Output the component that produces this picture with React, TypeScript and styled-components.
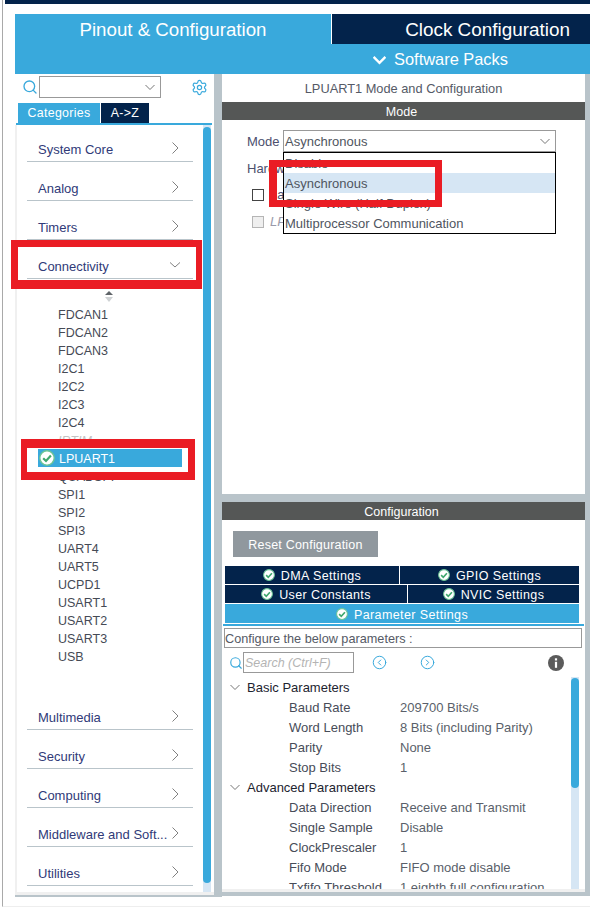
import React from "react"
import styled, { createGlobalStyle } from "styled-components"
import { CircleChevronLeft, CircleChevronRight, Search, Settings } from "lucide-react"

const navy = "#03234b"
const blue = "#39a9dc"
const gutter = "#b9c4ca"
const barGrey = "#555756"
const track = "#d6e6f4"

const GlobalStyle = createGlobalStyle`
    html, body {
        margin: 0;
        padding: 0;
        background: #fff;
    }
    * {
        box-sizing: border-box;
    }
`

const Page = styled.div`
    position: relative;
    width: 590px;
    height: 908px;
    overflow: hidden;
    padding-left: 2px;
    background: #fff;
    font-family: "Liberation Sans", Arial, sans-serif;
    font-size: 13px;
    color: #4a4f5a;
`
const Frame = styled.div`
    height: 907px;
    border-left: 1px solid #a9a9a9;
    border-bottom: 1px solid #eeeeee;
    padding-left: 2px;
`
const TopBar = styled.div`
    height: 4px;
    background: ${navy};
`
const Workspace = styled.div`
    margin-top: 10px;
    margin-left: 10px;
`
const Header = styled.header`
    display: grid;
    grid-template-columns: 316px 1fr;
    grid-template-rows: 30px 30px;
    background: ${blue};
    color: #fff;
`
const MainTab = styled.div`
    grid-row: span 2;
    padding-top: 5px;
    text-align: center;
    font-size: 18.7px;
    line-height: 22px;
`
const ClockTab = styled.div`
    border-left: 1px solid #fff;
    background: ${navy};
    padding: 5px 20px 0 0;
    text-align: right;
    font-size: 18.9px;
    line-height: 22px;
`
const PacksBar = styled.div`
    display: flex;
    align-items: center;
    justify-content: center;
    gap: 8px;
    padding-right: 40px;
    font-size: 16.4px;
`
const Body = styled.div`
    display: flex;
    align-items: flex-start;
`
const LeftPanel = styled.section`
    display: flex;
    flex-direction: column;
    width: 199px;
    height: 823px;
    border-bottom: 2px solid ${gutter};
`
const SearchRow = styled.div`
    display: flex;
    align-items: center;
    height: 22px;
    margin-top: 2px;
    padding-left: 7px;
`
const SearchIcon = styled(Search)`
    flex-shrink: 0;
    margin-right: 1px;
    color: ${blue};
`
const Combo = styled.div<{ $wide?: boolean }>`
    display: flex;
    align-items: center;
    justify-content: space-between;
    height: 22px;
    padding: 0 5px 0 1px;
    border: 1px solid #999;
    background: #fff;
    width: ${(p) => (p.$wide ? "273px" : "122px")};
`
const GearButton = styled.div`
    display: flex;
    margin-left: 30px;
    color: ${blue};
`
const ViewTabs = styled.div`
    display: flex;
    gap: 1px;
    height: 20px;
    margin: 5px 0 0 3px;
`
const ViewTab = styled.div<{ $active?: boolean }>`
    width: ${(p) => (p.$active ? "82px" : "48px")};
    padding-top: 1px;
    background: ${(p) => (p.$active ? blue : navy)};
    color: #fff;
    text-align: center;
    font-size: 12.4px;
    letter-spacing: 0.3px;
    line-height: 19px;
`
const BlueRule = styled.div`
    height: 2px;
    margin-left: 1px;
    margin-right: 2px;
    background: ${blue};
`
const ListArea = styled.div`
    flex: 1;
    min-height: 0;
    display: flex;
    border-left: 2px solid #f0f0f0;
    border-bottom: 3px solid #f0f0f0;
    padding-right: 3px;
`
const CategoryList = styled.div`
    flex: 1;
    min-width: 0;
    display: flex;
    flex-direction: column;
`
const Category = styled.div`
    display: flex;
    align-items: flex-end;
    justify-content: space-between;
    flex-shrink: 0;
    height: 39px;
    margin: 0 10px;
    padding: 0 13px 3px 11px;
    border-bottom: 1px solid ${gutter};
    color: #303a78;
    line-height: 16px;

    &:first-child {
        height: 37px;
    }
`
const CategoryIcon = styled.svg`
    flex-shrink: 0;
    margin-bottom: 4px;
`
const SubList = styled.div`
    display: flex;
    flex-direction: column;
    flex-shrink: 0;
    margin-bottom: 26px;
`
const ScrollMark = styled.svg`
    display: block;
    margin: 12px 0 2px 88px;
`
const SubItem = styled.div<{ $disabled?: boolean }>`
    height: 18px;
    padding-left: 41px;
    font-size: 12.5px;
    line-height: 20px;
    color: ${(p) => (p.$disabled ? "#c4c4c4" : "#454a55")};
    font-style: ${(p) => (p.$disabled ? "italic" : "normal")};
`
const SelectedItem = styled.div`
    display: flex;
    align-items: center;
    gap: 4px;
    width: 144px;
    height: 18px;
    margin-left: 21px;
    padding-left: 1px;
    background: ${blue};
    color: #fff;
    font-size: 12.5px;
`
const LoweredLabel = styled.span`
    margin-top: 2px;
`
const ScrollTrack = styled.div`
    flex-shrink: 0;
    width: 8px;
    background: ${track};
`
const ScrollThumb = styled.div<{ $top: number; $height: number }>`
    width: 100%;
    height: ${(p) => p.$height}px;
    margin-top: ${(p) => p.$top}px;
    border-radius: 4px;
    background: ${blue};
`
const Splitter = styled.div`
    flex-shrink: 0;
    width: 8px;
    height: 823px;
    background: ${gutter};
`
const RightColumn = styled.div`
    display: flex;
    flex-direction: column;
    flex: 1;
    height: 822px;
    padding: 0 5px 4px 0;
    background: ${gutter};
`
const ModePanel = styled.section`
    position: relative;
    height: 420px;
    flex-shrink: 0;
    background: #fff;
`
const PanelTitle = styled.div`
    height: 28px;
    padding-top: 7px;
    text-align: center;
    font-size: 12.8px;
    line-height: 16px;
    color: #555a66;
`
const DarkBar = styled.div`
    flex-shrink: 0;
    height: 18px;
    padding-right: 4px;
    background: ${barGrey};
    color: #fff;
    text-align: center;
    font-size: 12.5px;
    line-height: 20px;
`
const ModeRow = styled.div`
    display: flex;
    align-items: center;
    margin: 10px 0 0 25px;
    color: #4c4f6e;
`
const ModeLabel = styled.span`
    width: 36px;
`
const ComboValue = styled.span`
    color: #4f5560;
`
const HardwareLabel = styled.div`
    margin: 8px 0 0 25px;
    line-height: 18px;
    color: #4c4f6e;
    white-space: nowrap;
`
const CheckRow = styled.div<{ $disabled?: boolean }>`
    display: flex;
    align-items: center;
    gap: 6px;
    margin: ${(p) => (p.$disabled ? "15px" : "11px")} 0 0 30px;
    height: 12px;
    line-height: 12px;
    color: ${(p) => (p.$disabled ? "#9a9aaa" : "#4c4f6e")};
    font-style: ${(p) => (p.$disabled ? "italic" : "normal")};
    white-space: nowrap;
`
const CheckBox = styled.span<{ $disabled?: boolean }>`
    flex-shrink: 0;
    width: 12px;
    height: 12px;
    border: 1px solid ${(p) => (p.$disabled ? "#b5b5b5" : "#444")};
    background: ${(p) => (p.$disabled ? "#efefef" : "#fff")};
`
const Dropdown = styled.div`
    position: absolute;
    left: 61px;
    top: 78px;
    width: 273px;
    height: 82px;
    border: 1px solid #000;
    background: #fff;
`
const DropdownOption = styled.div<{ $active?: boolean }>`
    height: 20px;
    padding-left: 1px;
    line-height: 21px;
    color: #4f5560;
    background: ${(p) => (p.$active ? track : "transparent")};
`
const PanelGap = styled.div`
    flex-shrink: 0;
    height: 8px;
`
const ConfigPanel = styled.section`
    flex: 1;
    min-height: 0;
    display: flex;
    flex-direction: column;
    background: #fff;
    border-bottom: 3px solid #f0f0f0;
`
const ResetButton = styled.div`
    flex-shrink: 0;
    width: 145px;
    height: 26px;
    margin: 11px 0 0 11px;
    background: #90989e;
    color: #fff;
    text-align: center;
    font-size: 12.5px;
    letter-spacing: 0.2px;
    line-height: 28px;
`
const TabGrid = styled.div`
    display: flex;
    flex-direction: column;
    flex-shrink: 0;
    gap: 1px;
    margin: 9px 6px 0 3px;
`
const TabRow = styled.div`
    display: flex;
    gap: 1px;
`
const ConfigTab = styled.div<{ $width?: number; $active?: boolean }>`
    display: flex;
    align-items: center;
    justify-content: center;
    gap: 6px;
    flex: ${(p) => (p.$width ? `0 0 ${p.$width}px` : "1")};
    height: ${(p) => (p.$active ? "19px" : "18px")};
    background: ${(p) => (p.$active ? blue : navy)};
    color: #fff;
    font-size: 12.5px;
    letter-spacing: 0.4px;
`
const ConfigRule = styled.div`
    flex-shrink: 0;
    height: 2px;
    margin: 1px 1px 0 1px;
    background: ${blue};
`
const HintBox = styled.div`
    flex-shrink: 0;
    height: 20px;
    margin: 2px 3px 0 2px;
    border: 1px solid #999;
    color: #555a66;
    font-size: 12.7px;
    line-height: 20px;
`
const ParamTools = styled.div`
    display: flex;
    align-items: center;
    flex-shrink: 0;
    height: 21px;
    margin-top: 4px;
    padding-left: 7px;
    color: ${blue};
`
const ParamSearch = styled.div`
    width: 111px;
    height: 21px;
    margin: 0 18px 0 0;
    padding-left: 1px;
    border: 1px solid #999;
    color: #b4b4b4;
    font-size: 12.5px;
    font-style: italic;
    line-height: 21px;
`
const NavLeft = styled(CircleChevronLeft)`
    margin-right: 33px;
`
const InfoIcon = styled.svg`
    margin-left: 113px;
`
const ParamArea = styled.div`
    flex: 1;
    min-height: 0;
    display: flex;
    margin-top: 4px;
    padding-right: 6px;
    overflow: hidden;
`
const ParamList = styled.div`
    flex: 1;
    min-width: 0;
    overflow: hidden;
`
const GroupRow = styled.div`
    display: flex;
    align-items: center;
    height: 20px;
    padding-left: 8px;
    color: #1d2430;
    gap: 7px;
`
const ParamRow = styled.div`
    display: grid;
    grid-template-columns: 111px 1fr;
    height: 20px;
    padding-left: 67px;
    line-height: 21px;
    white-space: nowrap;
`
const ParamName = styled.span`
    color: #474c58;
`
const ParamValue = styled.span`
    color: #5a5f6a;
`
const Callout = styled.div<{ $x: number; $y: number; $w: number; $h: number; $border: string }>`
    position: absolute;
    left: ${(p) => p.$x}px;
    top: ${(p) => p.$y}px;
    width: ${(p) => p.$w}px;
    height: ${(p) => p.$h}px;
    border-style: solid;
    border-color: #ea1c24;
    border-width: ${(p) => p.$border};
    pointer-events: none;
`

const Chevron: React.FC<{ open?: boolean; size?: number; color?: string; weight?: number }> = ({ open, size = 10, color = "#777", weight = 1 }) => (
    <svg width={size} height={size} viewBox="0 0 10 10" fill="none" stroke={color} strokeWidth={weight} style={{ flexShrink: 0 }}>
        <path d={open ? "M0.5 3 L5 7.5 L9.5 3" : "M3 0.5 L7.5 5 L3 9.5"} />
    </svg>
)

const CheckBadge: React.FC<{ size: number }> = ({ size }) => (
    <svg width={size} height={size} viewBox="0 0 16 16" style={{ flexShrink: 0 }}>
        <circle cx="8" cy="8" r="7.2" fill="#fff" stroke="#6cc596" strokeWidth="1.4" />
        <path d="M4.2 8.2 L7 11 L11.9 5.6" fill="none" stroke="#3fa86e" strokeWidth="2.2" />
    </svg>
)

const CategoryRow: React.FC<{ name: string; open?: boolean }> = ({ name, open }) => (
    <Category>
        <span>{name}</span>
        <CategoryIcon width="10" height="12" viewBox="0 0 10 12" fill="none" stroke="#808080">
            {open ? <path d="M-0.5 3 L5 8 L10.5 3" /> : <path d="M2.5 0.5 L8 6 L2.5 11.5" />}
        </CategoryIcon>
    </Category>
)

const SettingsTab: React.FC<{ label: string; width?: number; active?: boolean }> = ({ label, width, active }) => (
    <ConfigTab $width={width} $active={active}>
        <CheckBadge size={12} />
        <LoweredLabel>{label}</LoweredLabel>
    </ConfigTab>
)

const upper = ["System Core", "Analog", "Timers"]
const lower = ["Multimedia", "Security", "Computing", "Middleware and Soft...", "Utilities"]
const peripheralsTop = ["FDCAN1", "FDCAN2", "FDCAN3", "I2C1", "I2C2", "I2C3", "I2C4"]
const peripheralsBottom = ["QUADSPI", "SPI1", "SPI2", "SPI3", "UART4", "UART5", "UCPD1", "USART1", "USART2", "USART3", "USB"]
const modes = ["Disable", "Asynchronous", "Single Wire (Half Duplex)", "Multiprocessor Communication"]

const basicParams = [
    ["Baud Rate", "209700 Bits/s"],
    ["Word Length", "8 Bits (including Parity)"],
    ["Parity", "None"],
    ["Stop Bits", "1"],
]
const advancedParams = [
    ["Data Direction", "Receive and Transmit"],
    ["Single Sample", "Disable"],
    ["ClockPrescaler", "1"],
    ["Fifo Mode", "FIFO mode disable"],
    ["Txfifo Threshold", "1 eighth full configuration"],
]

const ParamGroup: React.FC<{ title: string; rows: string[][] }> = ({ title, rows }) => (
    <>
        <GroupRow>
            <Chevron open />
            {title}
        </GroupRow>
        {rows.map(([name, value]) => (
            <ParamRow key={name}>
                <ParamName>{name}</ParamName>
                <ParamValue>{value}</ParamValue>
            </ParamRow>
        ))}
    </>
)

export default function App() {
    return (
        <Page>
            <GlobalStyle />
            <Frame>
                <TopBar />
                <Workspace>
                    <Header>
                        <MainTab>Pinout &amp; Configuration</MainTab>
                        <ClockTab>Clock Configuration</ClockTab>
                        <PacksBar>
                            <Chevron open size={13} color="#fff" weight={1.8} />
                            Software Packs
                        </PacksBar>
                    </Header>
                    <Body>
                        <LeftPanel>
                            <SearchRow>
                                <SearchIcon size={16} strokeWidth={2} />
                                <Combo>
                                    <span />
                                    <Chevron open />
                                </Combo>
                                <GearButton>
                                    <Settings size={17} strokeWidth={1.7} />
                                </GearButton>
                            </SearchRow>
                            <ViewTabs>
                                <ViewTab $active>Categories</ViewTab>
                                <ViewTab>A-&gt;Z</ViewTab>
                            </ViewTabs>
                            <BlueRule />
                            <ListArea>
                                <CategoryList>
                                    {upper.map((name) => (
                                        <CategoryRow key={name} name={name} />
                                    ))}
                                    <CategoryRow name="Connectivity" open />
                                    <SubList>
                                        <ScrollMark width="8" height="12" viewBox="0 0 8 12">
                                            <path d="M4 0 L8 4 H0 Z" fill="#5f6468" />
                                            <path d="M0 6 H8 L4 11 Z" fill="#cfd2d4" />
                                        </ScrollMark>
                                        {peripheralsTop.map((name) => (
                                            <SubItem key={name}>{name}</SubItem>
                                        ))}
                                        <SubItem $disabled>IRTIM</SubItem>
                                        <SelectedItem>
                                            <CheckBadge size={16} />
                                            <LoweredLabel>LPUART1</LoweredLabel>
                                        </SelectedItem>
                                        {peripheralsBottom.map((name) => (
                                            <SubItem key={name}>{name}</SubItem>
                                        ))}
                                    </SubList>
                                    {lower.map((name) => (
                                        <CategoryRow key={name} name={name} />
                                    ))}
                                </CategoryList>
                                <ScrollTrack>
                                    <ScrollThumb $top={2} $height={756} />
                                </ScrollTrack>
                            </ListArea>
                        </LeftPanel>
                        <Splitter />
                        <RightColumn>
                            <ModePanel>
                                <PanelTitle>LPUART1 Mode and Configuration</PanelTitle>
                                <DarkBar>Mode</DarkBar>
                                <ModeRow>
                                    <ModeLabel>Mode</ModeLabel>
                                    <Combo $wide>
                                        <ComboValue>Asynchronous</ComboValue>
                                        <Chevron open />
                                    </Combo>
                                </ModeRow>
                                <HardwareLabel>Hardw</HardwareLabel>
                                <CheckRow>
                                    <CheckBox />
                                    La
                                </CheckRow>
                                <CheckRow $disabled>
                                    <CheckBox $disabled />
                                    LP
                                </CheckRow>
                                <Dropdown>
                                    {modes.map((mode) => (
                                        <DropdownOption key={mode} $active={mode === "Asynchronous"}>
                                            {mode}
                                        </DropdownOption>
                                    ))}
                                </Dropdown>
                            </ModePanel>
                            <PanelGap />
                            <ConfigPanel>
                                <DarkBar>Configuration</DarkBar>
                                <ResetButton>Reset Configuration</ResetButton>
                                <TabGrid>
                                    <TabRow>
                                        <SettingsTab label="DMA Settings" width={174} />
                                        <SettingsTab label="GPIO Settings" />
                                    </TabRow>
                                    <TabRow>
                                        <SettingsTab label="User Constants" width={182} />
                                        <SettingsTab label="NVIC Settings" />
                                    </TabRow>
                                    <TabRow>
                                        <SettingsTab label="Parameter Settings" active />
                                    </TabRow>
                                </TabGrid>
                                <ConfigRule />
                                <HintBox>Configure the below parameters :</HintBox>
                                <ParamTools>
                                    <Search size={14} strokeWidth={2} />
                                    <ParamSearch>Search (Ctrl+F)</ParamSearch>
                                    <NavLeft size={15} strokeWidth={1.6} />
                                    <CircleChevronRight size={15} strokeWidth={1.6} />
                                    <InfoIcon width="16" height="16" viewBox="0 0 16 16">
                                        <circle cx="8" cy="8" r="8" fill="#5b5b5b" />
                                        <rect x="6.9" y="6.8" width="2.2" height="6" fill="#fff" />
                                        <rect x="6.9" y="3.3" width="2.2" height="2.2" fill="#fff" />
                                    </InfoIcon>
                                </ParamTools>
                                <ParamArea>
                                    <ParamList>
                                        <ParamGroup title="Basic Parameters" rows={basicParams} />
                                        <ParamGroup title="Advanced Parameters" rows={advancedParams} />
                                    </ParamList>
                                    <ScrollTrack>
                                        <ScrollThumb $top={1} $height={110} />
                                    </ScrollTrack>
                                </ParamArea>
                            </ConfigPanel>
                        </RightColumn>
                    </Body>
                </Workspace>
            </Frame>
            <Callout $x={11} $y={240} $w={191} $h={49} $border="7px 6px 9px 7px" />
            <Callout $x={21} $y={439} $w={174} $h={41} $border="9px 7px 8px 6px" />
            <Callout $x={269} $y={160} $w={173} $h={47} $border="7px 7px 7px 8px" />
        </Page>
    )
}
